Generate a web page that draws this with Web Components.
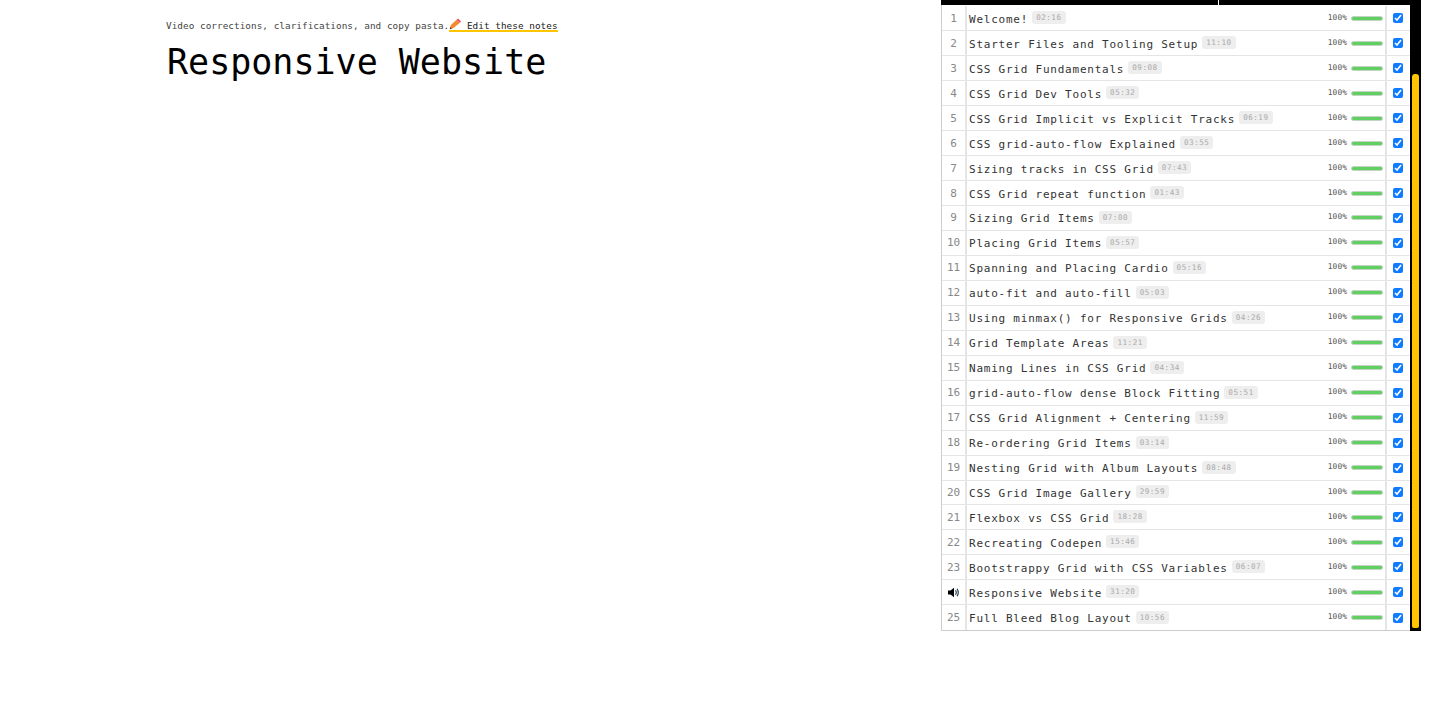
<!DOCTYPE html>
<html>
<head>
<meta charset="utf-8">
<title>Responsive Website</title>
<style>
  html, body { margin: 0; height: 100%; background: #fff; }
  body { font-family: "DejaVu Sans Mono", monospace; }
</style>
</head>
<body>
<video-page>
  <video-notes slot="main" title-text="Responsive Website"></video-notes>
  <video-sidebar slot="side"></video-sidebar>
</video-page>

<script>
const VIDEOS = [
  ["Welcome!", "02:16"],
  ["Starter Files and Tooling Setup", "11:10"],
  ["CSS Grid Fundamentals", "09:08"],
  ["CSS Grid Dev Tools", "05:32"],
  ["CSS Grid Implicit vs Explicit Tracks", "06:19"],
  ["CSS grid-auto-flow Explained", "03:55"],
  ["Sizing tracks in CSS Grid", "07:43"],
  ["CSS Grid repeat function", "01:43"],
  ["Sizing Grid Items", "07:00"],
  ["Placing Grid Items", "05:57"],
  ["Spanning and Placing Cardio", "05:16"],
  ["auto-fit and auto-fill", "05:03"],
  ["Using minmax() for Responsive Grids", "04:26"],
  ["Grid Template Areas", "11:21"],
  ["Naming Lines in CSS Grid", "04:34"],
  ["grid-auto-flow dense Block Fitting", "05:51"],
  ["CSS Grid Alignment + Centering", "11:59"],
  ["Re-ordering Grid Items", "03:14"],
  ["Nesting Grid with Album Layouts", "08:48"],
  ["CSS Grid Image Gallery", "29:59"],
  ["Flexbox vs CSS Grid", "18:28"],
  ["Recreating Codepen", "15:46"],
  ["Bootstrappy Grid with CSS Variables", "06:07"],
  ["Responsive Website", "31:20"],
  ["Full Bleed Blog Layout", "10:56"],
];

class VideoPage extends HTMLElement {
  constructor() {
    super();
    this.attachShadow({ mode: "open" }).innerHTML = `<style>
      :host { display: flex; align-items: flex-start; }
      .main { width: 941px; flex: none; }
      .side { flex: none; }
    </style>
    <div class="main"><slot name="main"></slot></div>
    <div class="side"><slot name="side"></slot></div>`;
  }
}

class VideoNotes extends HTMLElement {
  constructor() {
    super();
    this.attachShadow({ mode: "open" }).innerHTML = `<style>
      :host { display: block; padding: 18px 0 0 166px; color: #444; }
      p { margin: 0; font-size: 9.35px; letter-spacing: .04px; line-height: 12px; white-space: nowrap; }
      a { color: #222; text-decoration: none; border-bottom: 2px solid #ffc600; display: inline-block; line-height: 9px; }
      svg { width: 12px; height: 12px; vertical-align: -1px; }
      h1 { margin: 7px 0 0 1px; font-size: 35px; line-height: 46px; font-weight: 400; color: #000; white-space: nowrap; }
    </style>
    <p>Video corrections, clarifications, and copy pasta.<a href="#"><svg viewBox="0 0 13 12"><path d="M.8 11.6 2 7.2 8.2 1.4 11.8 4.6 5 10.4Z" fill="#f58a2e"/><path d="M8.2 1.4 9.8 0 13 3.2 11.8 4.6Z" fill="#e8476a"/><path d="M.8 11.6 1.4 9.2 3.2 11Z" fill="#333"/></svg> Edit these notes</a></p>
    <h1></h1>`;
  }
  connectedCallback() {
    this.shadowRoot.querySelector("h1").textContent = this.getAttribute("title-text");
  }
}

class VideoRow extends HTMLElement {
  constructor() {
    super();
    this.attachShadow({ mode: "open" }).innerHTML = `<style>
      :host { display: grid; grid-template-columns: 25px 1fr 25px; height: 24.96px; box-sizing: border-box; border-bottom: 1px solid #e5e5e5; background: #fff; }
      :host(:last-child) { height: 25.6px; border-bottom-color: #ccc; }
      .num { border-right: 2px solid #e5e5e5; display: flex; align-items: center; justify-content: center; font-size: 11px; color: #888; }
      .num svg { width: 12px; height: 11px; }
      .title { display: flex; align-items: center; padding-left: 2px; min-width: 0; font-size: 11px; letter-spacing: .77px; color: #333; white-space: nowrap; }
      .name { padding-top: 2px; }
      .time { margin-left: 4px; height: 13px; line-height: 13px; padding: 0 4px; border-radius: 3px; background: #eee; color: #aaa; font-size: 7.6px; letter-spacing: .5px; margin-top: -1px; }
      .pct { margin-left: auto; font-size: 7.8px; letter-spacing: .1px; color: #555; margin-top: -2px; }
      .bar { margin: 0 2px 0 4px; width: 32px; height: 5px; box-sizing: border-box; border: 1px solid #c4d4c4; border-radius: 3px; background: #62cf62; }
      .check { border-left: 2px solid #e5e5e5; display: flex; align-items: center; padding-left: 6px; }
      input { width: 10px; height: 10px; margin: 0; accent-color: #0f7bff; }
    </style>
    <div class="num"></div>
    <div class="title"><span class="name"></span><span class="time"></span><span class="pct">100%</span><span class="bar"></span></div>
    <div class="check"><input type="checkbox" checked></div>`;
  }
  connectedCallback() {
    const root = this.shadowRoot;
    root.querySelector(".name").textContent = this.getAttribute("name");
    root.querySelector(".time").textContent = this.getAttribute("time");
    if (this.hasAttribute("playing")) {
      root.querySelector(".num").innerHTML = `<svg viewBox="0 0 12 11"><path d="M0 3.5H2.5L6 .8V10.2L2.5 7.5H0Z" fill="#000"/><path d="M7.5 3.2Q9 5.5 7.5 7.8M9 1.8Q11.5 5.5 9 9.2" fill="none" stroke="#234" stroke-width="1.1"/></svg>`;
    } else {
      root.querySelector(".num").textContent = this.getAttribute("num");
    }
  }
}

class VideoSidebar extends HTMLElement {
  constructor() {
    super();
    this.attachShadow({ mode: "open" }).innerHTML = `<style>
      :host { display: block; width: 480px; background: #000; }
      .top { height: 5px; position: relative; }
      .tick { position: absolute; left: 277px; top: 0; width: 1px; height: 5px; background: #fff; }
      .wrap { display: flex; }
      .list { width: 469px; flex: none; padding-top: 1.4px; border-left: 1px solid #ccc; box-sizing: border-box; background: #fff; }
      .track { width: 11px; flex: none; padding: 69px 2px 3px; box-sizing: border-box; display: flex; }
      .thumb { flex: 1; background: #ffc600; border-radius: 3px 3px 2px 2px; }
    </style>
    <div class="top"><span class="tick"></span></div>
    <div class="wrap"><div class="list"></div><div class="track"><div class="thumb"></div></div></div>`;
    const list = this.shadowRoot.querySelector(".list");
    VIDEOS.forEach(([name, time], i) => {
      const row = document.createElement("video-row");
      row.setAttribute("num", i + 1);
      row.setAttribute("name", name);
      row.setAttribute("time", time);
      if (name == "Responsive Website") row.setAttribute("playing", "");
      list.appendChild(row);
    });
  }
}

customElements.define("video-page", VideoPage);
customElements.define("video-notes", VideoNotes);
customElements.define("video-row", VideoRow);
customElements.define("video-sidebar", VideoSidebar);
</script>
</body>
</html>
